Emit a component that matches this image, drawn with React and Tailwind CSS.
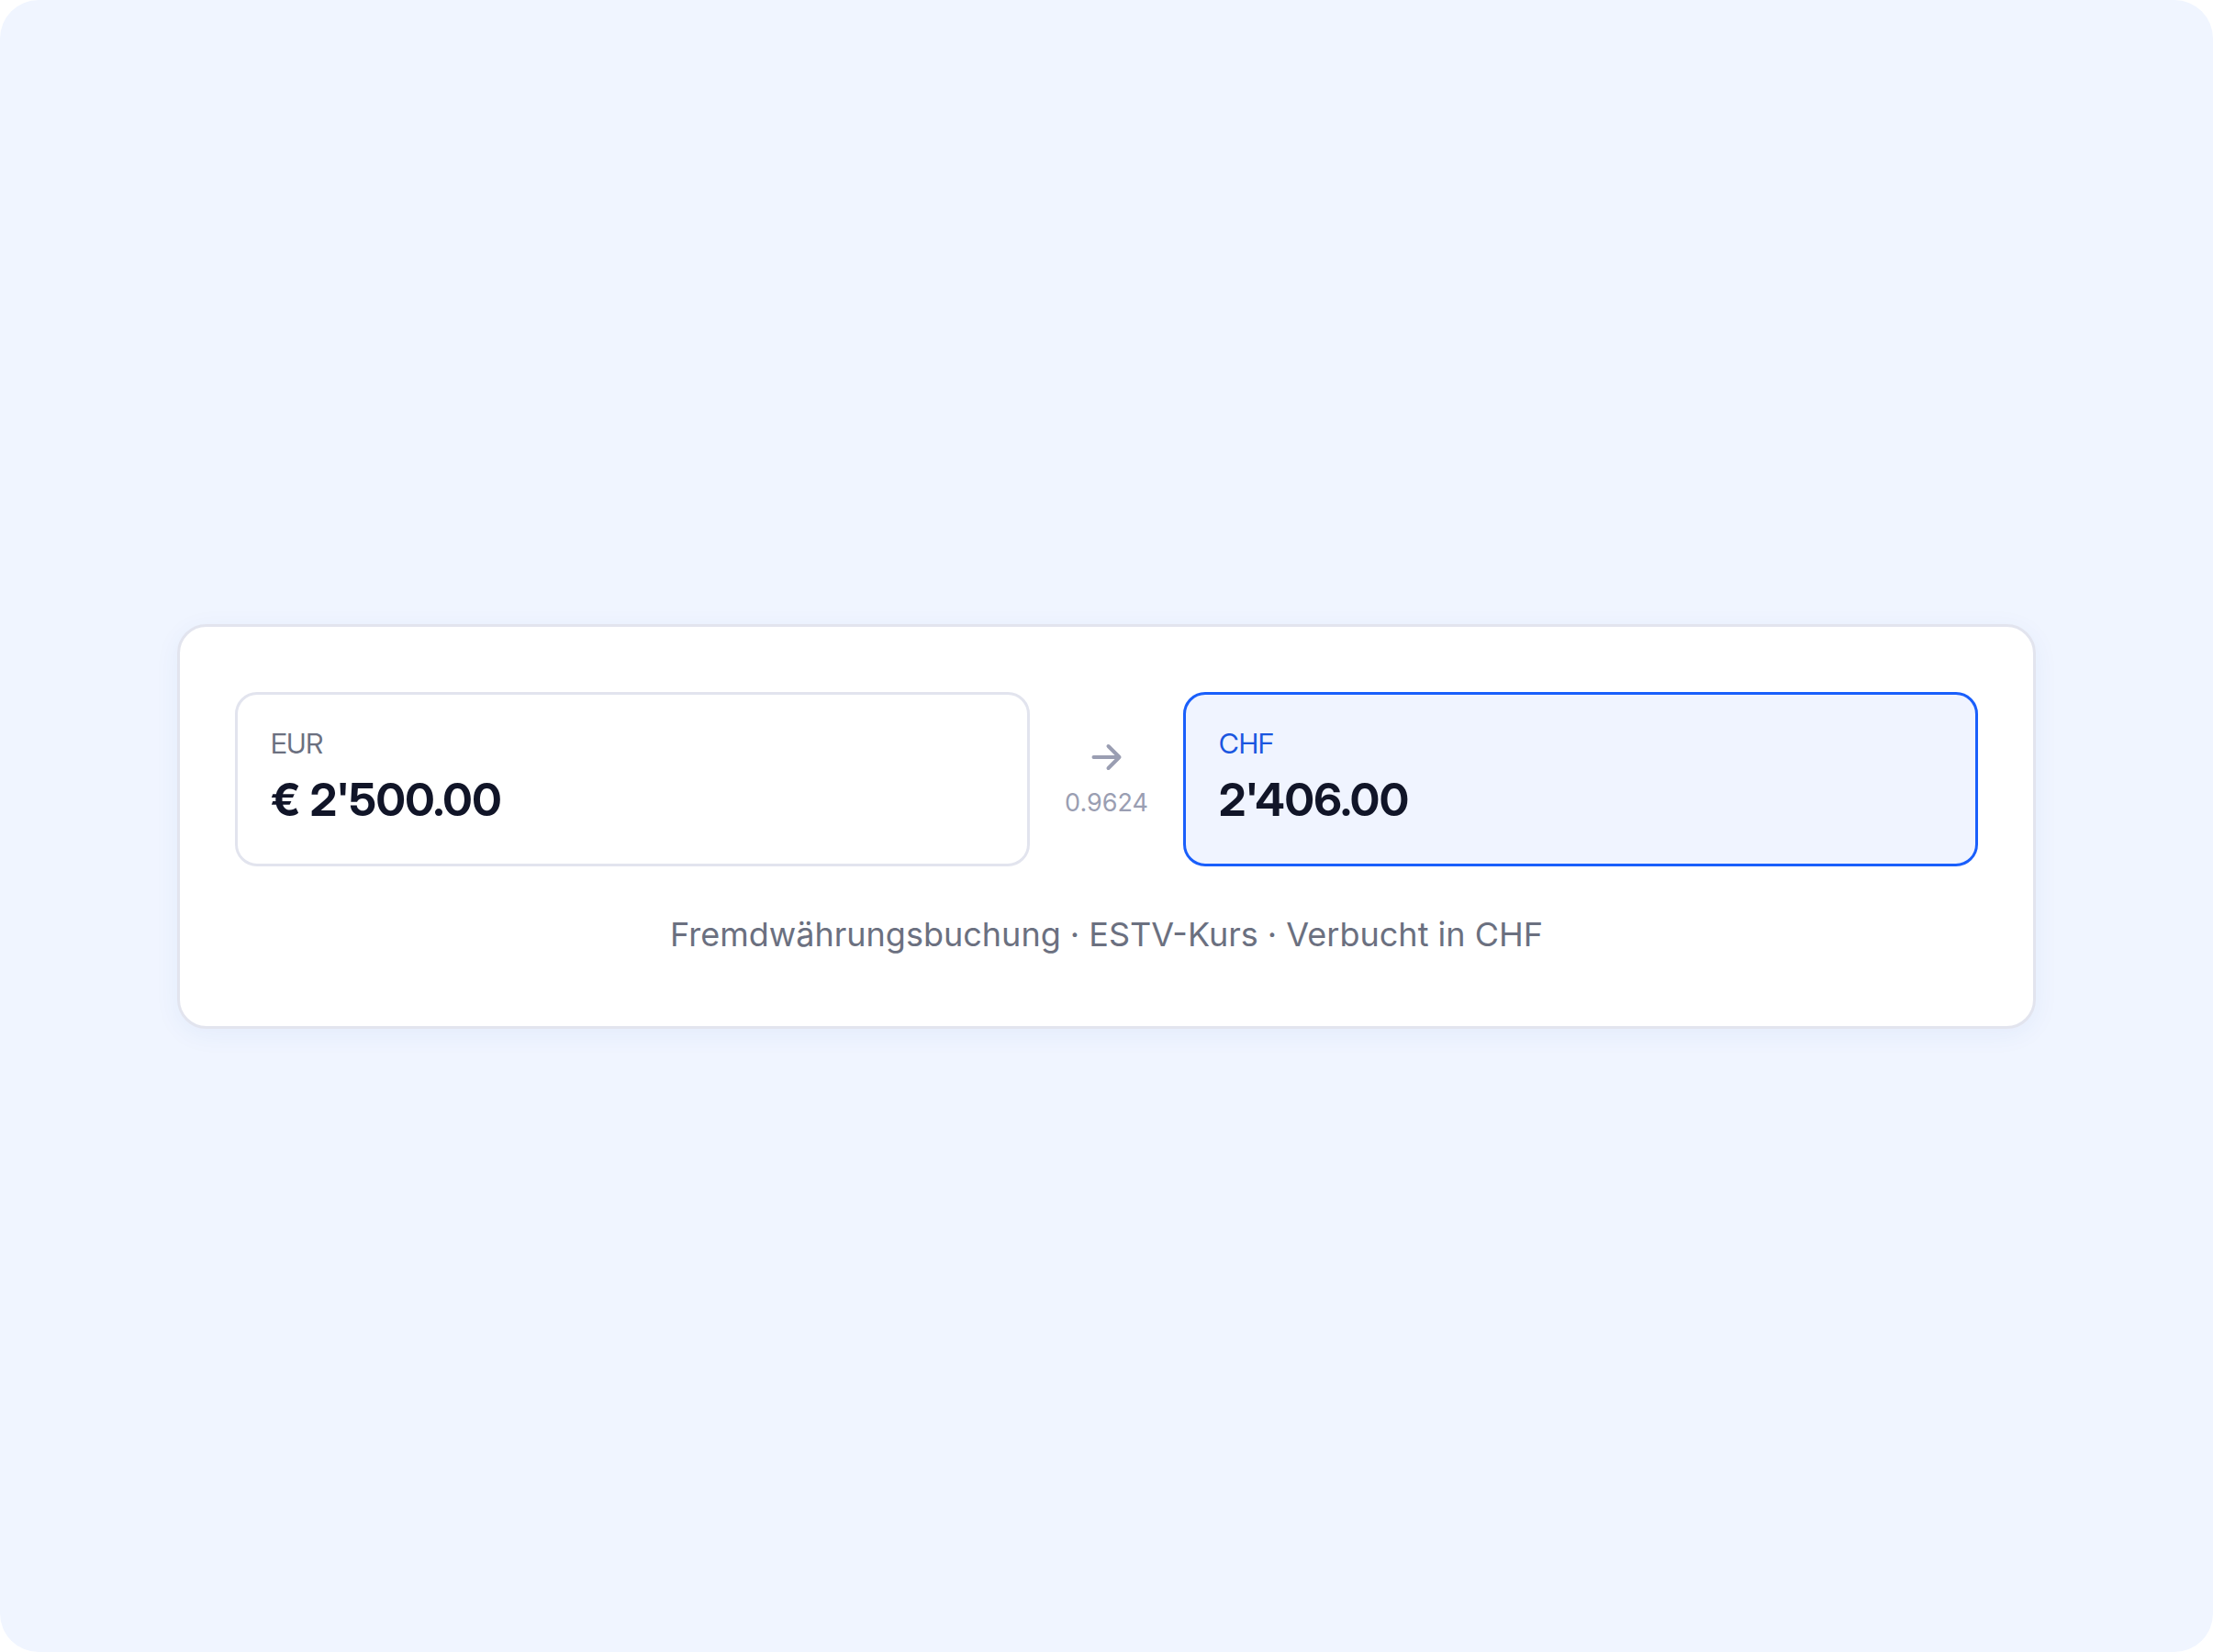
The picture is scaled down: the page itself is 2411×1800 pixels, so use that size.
import React from 'react';

const AmountBox = ({ currency, amount, active }) => (
  <div
    className={`flex-1 rounded-[24px] border-3 px-[36px] py-[30px] font-['Inter_Display','Inter',sans-serif] ${
      active ? 'border-[#1a5ffb] bg-[#f0f4ff]' : 'border-[#e2e4ee] bg-white'
    }`}
  >
    <p className={`text-[30px] leading-[46px] ${active ? 'text-[#1a56e0]' : 'text-[#6b7080]'}`}>
      {currency}
    </p>
    <p className="text-[49px] leading-[78px] font-bold text-[#111528]">{amount}</p>
  </div>
);

const ArrowIcon = () => (
  <svg
    viewBox="0 0 48 48"
    className="size-[48px]"
    fill="none"
    stroke="currentColor"
    strokeWidth="4"
    strokeLinecap="round"
    strokeLinejoin="round"
    aria-hidden="true"
  >
    <path d="M9.5 23h28M25.5 11l12 12-12 12" />
  </svg>
);

const App = () => {
  return (
    <div className="min-h-screen bg-white font-['Inter',sans-serif]">
      <main className="flex min-h-screen items-center rounded-[42px] bg-[#f0f5ff] px-[8%]">
        <section className="w-full rounded-[32px] border-3 border-[#e2e4ee] bg-white px-[60px] pt-[71px] pb-[73px] shadow-[0_6px_28px_rgba(26,86,190,0.06)]">
          <div className="flex items-center gap-[38px]">
            <AmountBox currency="EUR" amount="€ 2'500.00" />

            {/* Exchange rate */}
            <div className="flex flex-col items-center gap-1 text-[#9a9eb2]">
              <ArrowIcon />
              <span className="text-[27px] leading-[42px]">0.9624</span>
            </div>

            <AmountBox currency="CHF" amount="2'406.00" active />
          </div>

          <p className="mt-[47px] text-center text-[36px] leading-[54px] text-[#6b7080]">
            Fremdwährungsbuchung · ESTV-Kurs · Verbucht in CHF
          </p>
        </section>
      </main>
    </div>
  );
};

export default App;
